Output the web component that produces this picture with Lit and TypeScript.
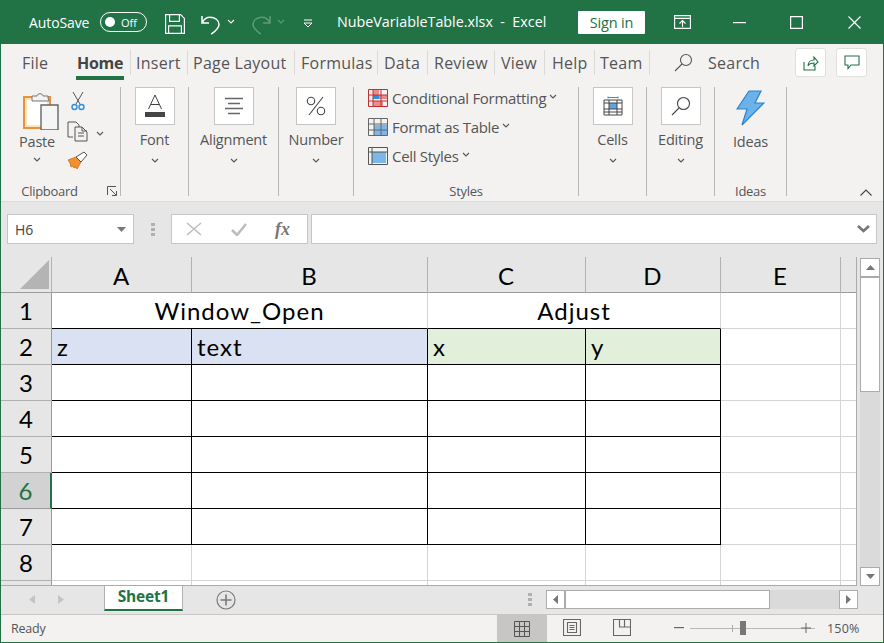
import { LitElement, html, css } from "lit";
import { customElement } from "lit/decorators.js";

const chev = (w = 8, c = "#555") => html`<svg class="chev" width="${w}" height="5" viewBox="0 0 8 5"><path d="M1 1l3 3 3-3" fill="none" stroke="${c}" stroke-width="1.1"/></svg>`;

const cols = [140, 236, 158, 135, 120, 17];
const rows = [1, 2, 3, 4, 5, 6, 7];

@customElement("app-root")
export class AppRoot extends LitElement {
  static styles = css`
    :host { display: block; width: 884px; height: 643px; overflow: hidden; font-family: "Open Sans", "Noto Sans", sans-serif; color: #444; }
    * { box-sizing: border-box; }
    svg { display: block; flex: none; }
    .win { width: 884px; height: 643px; display: flex; flex-direction: column; border: solid #217346; border-width: 0 1px 1px 1px; background: #e6e6e6; }
    .title { height: 44px; margin: 0 -1px; background: #217346; color: #fff; display: flex; align-items: center; font-size: 14px; flex: none; position: relative; }
    .autosave { margin-left: 29px; width: 66px; letter-spacing: -.1px; white-space: nowrap; }
    .toggle { margin-left: 5px; width: 47px; height: 20px; border: 1px solid #fff; border-radius: 10px; display: flex; align-items: center; padding-left: 4px; font-size: 11px; gap: 6px; }
    .knob { width: 10px; height: 10px; border-radius: 50%; background: #fff; }
    .fname { position: absolute; left: 337px; top: 13px; font-size: 14.3px; white-space: pre; line-height: 18px; }
    .signin { position: absolute; left: 578px; top: 11px; width: 67px; height: 23px; background: #fff; color: #217346; border-radius: 1px; font-size: 14.5px; display: flex; align-items: center; justify-content: center; letter-spacing: -.2px; }

    .tabs { height: 36px; background: #f3f2f1; font-size: 16px; position: relative; flex: none; letter-spacing: .25px; }
    .tab { position: absolute; top: 8px; line-height: 22px; color: #555; white-space: nowrap; }
    .tab.active { font-weight: 700; color: #444; letter-spacing: -.3px; }
    .underline { position: absolute; left: 75px; top: 32px; width: 48px; height: 4px; background: #217346; }
    .tsep { position: absolute; top: 6px; width: 1px; height: 25px; background: #dcdad8; }
    .roundbtn { position: absolute; top: 4px; width: 31px; height: 29px; background: #fff; border: 1px solid #e1dfdd; border-radius: 3px; display: flex; align-items: center; justify-content: center; }

    .ribbon { height: 122px; background: #f3f2f1; border-bottom: 1px solid #dadada; display: grid; grid-template-columns: 120px 68px 90px 75px 225px 68px 68px 72px 1fr; flex: none; padding-top: 7px; }
    .group { border-right: 1px solid #b8b8b8; height: 109px; position: relative; font-size: 14.5px; color: #555; letter-spacing: -.2px; }
    .group.last { border-right: 0; }
    .glabel { position: absolute; bottom: -3px; left: 0; right: 0; text-align: center; font-size: 13px; letter-spacing: -.3px; line-height: 16px; }
    .big { display: flex; flex-direction: column; align-items: center; }
    .tile { width: 40px; height: 38px; background: #fff; border: 1px solid #c8c6c4; display: flex; align-items: center; justify-content: center; }
    .big .t { margin-top: 6px; line-height: 18px; }
    .big .chev { margin-top: 9px; }
    .styleitem { position: absolute; left: 14px; display: flex; align-items: center; gap: 4px; height: 22px; white-space: nowrap; font-size: 15px; letter-spacing: -.3px; }
    .styleitem .chev { margin-left: -1px; margin-bottom: 3px; }
    .abs { position: absolute; }

    .fbar { height: 55px; display: flex; align-items: flex-start; padding-top: 12px; flex: none; }
    .box { height: 30px; background: #fff; border: 1px solid #c6c6c6; display: flex; align-items: center; }
    .name { width: 127px; margin-left: 6px; padding: 0 7px; font-size: 14px; justify-content: space-between; color: #444; }
    .dots { width: 5px; display: flex; flex-direction: column; gap: 2px; }
    .fbar .dots { margin: 9px 0 0 17px; }
    .dots i { width: 4px; height: 3px; background: #b0b0b0; }
    .fx { width: 137px; margin-left: 15px; padding-left: 14px; gap: 29px; }
    .fxt { font-family: "Liberation Serif", serif; font-style: italic; font-size: 18px; font-weight: 700; color: #777; margin-left: -1px; }
    .input { width: 566px; margin-left: 3px; justify-content: flex-end; padding-right: 6px; }

    .sheetwrap { height: 329px; display: flex; flex: none; }
    .sheet { display: grid; width: 857px; height: 329px; grid-template-columns: 51px 140px 236px 158px 135px 120px 17px; grid-template-rows: repeat(9, 36px) 4px; overflow: hidden; background: #fff; border-right: 1px solid #ababab; border-bottom: 1px solid #ababab; font-family: Lato, sans-serif; color: #000; font-size: 24px; letter-spacing: 1px; }
    .ch { background: #e6e6e6; border-right: 1px solid #b1b1b1; border-bottom: 1px solid #9b9b9b; display: flex; align-items: center; justify-content: center; padding-top: 1px; }
    .corner { position: relative; }
    .tri { position: absolute; right: 2px; bottom: 3px; width: 0; height: 0; border-left: 29px solid transparent; border-bottom: 29px solid #b4b4b4; }
    .rh { background: #e6e6e6; border-right: 1px solid #9b9b9b; border-bottom: 1px solid #b1b1b1; display: flex; align-items: center; justify-content: center; letter-spacing: 0; }
    .rh.sel { background: #d2d2d2; color: #217346; border-right: 2px solid #217346; border-bottom-color: #9b9b9b; }
    .c { border-right: 1px solid #d4d4d4; border-bottom: 1px solid #d4d4d4; display: flex; align-items: flex-end; padding: 0 0 3px 5px; min-width: 0; }
    .b { border-right-color: #000; border-bottom-color: #000; }
    .bb { border-bottom-color: #000; }
    .merged { justify-content: center; padding: 0 0 1px; align-items: center; }
    .blue { background: #d9e1f2; }
    .green { background: #e2efda; }
    .open { border-bottom: 0; }

    .vs { width: 26px; padding: 1px 0 0 3px; display: flex; flex-direction: column; background: #e6e6e6; height: 329px; }
    .sb { background: #fff; border: 1px solid #ababab; display: flex; align-items: center; justify-content: center; flex: none; }
    .vtrack { height: 328px; background: #dadada; width: 20px; display: flex; flex-direction: column; }

    .tabbar { height: 29px; position: relative; flex: none; border-bottom: 1px solid #c6c6c6; background: #e6e6e6; }
    .sheettab { position: absolute; left: 103px; top: 0; width: 79px; height: 25px; background: #fff; border: solid #b1b1b1; border-width: 0 1px; border-bottom: 2px solid #217346; color: #217346; font-weight: 700; font-size: 15.5px; text-align: center; line-height: 21px; letter-spacing: -.2px; }
    .hs { position: absolute; left: 545px; top: 4px; width: 312px; height: 19px; background: #dadada; display: flex; }
    .status { flex: 1; background: #f3f2f1; position: relative; font-size: 12.5px; color: #555; }
    .ready { position: absolute; left: 10px; top: 5px; line-height: 18px; letter-spacing: -.2px; }
    .normal { position: absolute; left: 496px; top: 0; width: 50px; height: 27px; background: #c8c6c4; display: flex; align-items: center; justify-content: center; }
    .sv { position: absolute; top: 4px; }
    .pct { position: absolute; left: 826px; top: 5px; line-height: 18px; letter-spacing: .2px; }
  `;

  title_() {
    return html`<div class="title">
      <span class="autosave">AutoSave</span>
      <span class="toggle"><span class="knob"></span>Off</span>
      <span class="abs" style="left:165px;top:14px"><svg width="20" height="20" viewBox="0 0 20 20" fill="none" stroke="#fff" stroke-width="1.2"><path d="M.6.6h15l3.8 3.8v15H.6zM4.6.6v6.8h9.8V.6M3.6 19.4v-7.6h12.8v7.6"/></svg></span>
      <span class="abs" style="left:201px;top:14px"><svg width="20" height="21" viewBox="0 0 20 21" fill="none" stroke="#fff" stroke-width="1.5"><path d="M1 2v7h7M1.2 8.6C3 5 6 3.2 9 3.2c5 0 9 3 9 7.2 0 3.6-3 6.2-7.8 9.8"/></svg></span>
      <span class="abs" style="left:227px;top:19px">${chev(8, "#fff")}</span>
      <span class="abs" style="left:251px;top:14px"><svg width="20" height="21" viewBox="0 0 20 21" fill="none" stroke="#5d9a78" stroke-width="1.5"><path d="M19 2v7h-7M18.8 8.6C17 5 14 3.2 11 3.2c-5 0-9 3-9 7.2 0 3.6 3 6.2 7.8 9.8"/></svg></span>
      <span class="abs" style="left:277px;top:19px">${chev(8, "#5d9a78")}</span>
      <span class="abs" style="left:303px;top:19px"><svg width="10" height="9" viewBox="0 0 10 9" fill="none" stroke="#fff" stroke-width="1"><path d="M1 1h8M1 4l4 4 4-4z"/></svg></span>
      <span class="fname">NubeVariableTable.xlsx  -  Excel</span>
      <span class="signin">Sign in</span>
      <span class="abs" style="left:674px;top:15px"><svg width="17" height="14" viewBox="0 0 17 14" fill="none" stroke="#fff" stroke-width="1.1"><path d="M.6.6h15.8v12.8H.6zM.6 3.4h15.8M8.5 12V5.500M5.500 8.500l3-3 3 3"/></svg></span>
      <span class="abs" style="left:733px;top:22px"><svg width="13" height="2" viewBox="0 0 13 2"><path d="M0 0h13v1.200H0z" fill="#fff"/></svg></span>
      <span class="abs" style="left:790px;top:16px"><svg width="13" height="13" viewBox="0 0 13 13" fill="none" stroke="#fff" stroke-width="1.200"><path d="M.6.6h11.800v11.800H.6z"/></svg></span>
      <span class="abs" style="left:848px;top:16px"><svg width="13" height="13" viewBox="0 0 13 13" fill="none" stroke="#fff" stroke-width="1.200"><path d="M.5.5l12 12M12.500.5l-12 12"/></svg></span>
    </div>`;
  }

  tabs_() {
    const t: [string, number, boolean?][] = [["File", 21], ["Home", 76, true], ["Insert", 135], ["Page Layout", 192], ["Formulas", 300], ["Data", 383], ["Review", 433], ["View", 500], ["Help", 551], ["Team", 599]];
    return html`<div class="tabs">
      ${t.map(([s, x, a]) => html`<span class="tab ${a ? "active" : ""}" style="left:${x}px">${s}</span>`)}
      <span class="underline"></span>
      ${[129, 186, 293, 376, 426, 493, 543, 593, 648].map((x) => html`<span class="tsep" style="left:${x}px"></span>`)}
      <span class="abs" style="left:673px;top:9px"><svg width="19" height="19" viewBox="0 0 19 19" fill="none" stroke="#555" stroke-width="1.100"><circle cx="12" cy="7" r="5.500"/><path d="M8 11l-7 7"/></svg></span>
      <span class="tab" style="left:707px">Search</span>
      <span class="roundbtn" style="left:794px"><svg width="16" height="16" viewBox="0 0 16 16" fill="none" stroke="#217346" stroke-width="1.100"><path d="M1 7v8h11v-4M5 11c0-4 3-6 6-6V2l4 5-4 4V8c-3 0-5 1-6 3z"/></svg></span>
      <span class="roundbtn" style="left:835px"><svg width="16" height="15" viewBox="0 0 16 15" fill="none" stroke="#217346" stroke-width="1.100"><path d="M1 1h14v9H7l-3 3.500V10H1z"/></svg></span>
    </div>`;
  }

  big(label: string, icon: unknown) {
    return html`<div class="group big"><span class="tile">${icon}</span><span class="t">${label}</span>${chev()}</div>`;
  }

  ribbon_() {
    const font = html`<svg width="20" height="24" viewBox="0 0 20 24"><path d="M3.500 15L10 1l6.500 14M5.800 10.500h8.400" fill="none" stroke="#444" stroke-width="1"/><path d="M0 18h20v5H0z" fill="#444"/></svg>`;
    const align = html`<svg width="18" height="18" viewBox="0 0 18 18"><path d="M0 1.500h18M3 6.500h12M0 11.500h18M3 16.500h12" stroke="#666" stroke-width="1.300"/></svg>`;
    const pct = html`<svg width="20" height="20" viewBox="0 0 20 20" fill="none" stroke="#444" stroke-width="1.100"><circle cx="5" cy="5" r="3.700"/><circle cx="15" cy="15" r="3.700"/><path d="M17 1L3 19"/></svg>`;
    const cells = html`<svg width="20" height="20" viewBox="0 0 20 20" fill="none"><path d="M6 7h8v6H6z" fill="#5ea5e0"/><path d="M1 4h18v15H1zM1 7h18M1 13h18M1 16h18M6 4v15M14 4v15" stroke="#444" stroke-width="1"/><path d="M5 1.500h10M5 .5v2M15 .5v2" stroke="#2f8fdc" stroke-width="1"/></svg>`;
    const mag = html`<svg width="20" height="20" viewBox="0 0 20 20" fill="none" stroke="#444" stroke-width="1.100"><circle cx="12.500" cy="7.500" r="6"/><path d="M8 12l-7 7"/></svg>`;
    const brush = html`<path d="M18 3L8 14l-3 3 3 0 2-2z" fill="#fff" stroke="#444" stroke-width="1"/>`;
    return html`<div class="ribbon">
      <div class="group">
        <span class="abs" style="left:22px;top:5px"><svg width="36" height="38" viewBox="0 0 36 38"><path d="M1 5h26v31H1z" fill="#fde5b5" stroke="#e8923c" stroke-width="2"/><path d="M4 8h20v25H4z" fill="#fff"/><path d="M9 6V4h5c0-3 6-3 6 0h5v2l1 3H9z" fill="#f3f2f1" stroke="#777" stroke-width="1"/><path d="M18 13h17v25H18z" fill="#f5f5f5" stroke="#666" stroke-width="1.400"/></svg></span>
        <span class="abs" style="left:18px;top:46px;line-height:18px">Paste</span>
        <span class="abs" style="left:32px;top:70px">${chev()}</span>
        <span class="abs" style="left:69px;top:4px"><svg width="16" height="20" viewBox="0 0 16 20" fill="none"><path d="M3 1l7 12M13 1L6 13" stroke="#555" stroke-width="1"/><circle cx="4.500" cy="16" r="2.500" stroke="#2f8fdc" stroke-width="1.400"/><circle cx="11.500" cy="16" r="2.500" stroke="#2f8fdc" stroke-width="1.400"/></svg></span>
        <span class="abs" style="left:66px;top:34px"><svg width="21" height="21" viewBox="0 0 21 21" fill="none" stroke="#555" stroke-width="1"><path d="M6 16H1V1h8l3 3v2M8 6h7l5 5v9H8zM11 12h6M11 15h6M15 6v4h5"/></svg></span>
        <span class="abs" style="left:95px;top:44px">${chev()}</span>
        <span class="abs" style="left:66px;top:64px"><svg width="21" height="19" viewBox="0 0 21 19"><path d="M1 9l8-3 5 5-4 7-1-2-2 1-1-2-2 1-1-4z" fill="#f09030" stroke="#d06a10" stroke-width=".8"/><path d="M9 6l2 2 1 1 2 2 6-7-3-3z" fill="#fff" stroke="#555" stroke-width="1"/></svg></span>
        <span class="glabel" style="right:22px">Clipboard</span>
        <span class="abs" style="right:3px;bottom:0"><svg width="10" height="10" viewBox="0 0 10 10" fill="none" stroke="#555" stroke-width="1"><path d="M.5 9V.5H9M3 3l6 6M9.500 5v4.500H5"/></svg></span>
      </div>
      ${this.big("Font", font)}
      ${this.big("Alignment", align)}
      ${this.big("Number", pct)}
      <div class="group">
        <div class="styleitem" style="top:0">
          <svg width="20" height="18" viewBox="0 0 20 18" fill="none"><path d="M5 1h6v5h8v4H5z" fill="#ef8a8a"/><path d="M5 12h10v5H5z" fill="#ef8a8a"/><path d="M5 6h6v4H5z" fill="#2f8fdc"/><path d="M.5.500h19v17H.500zM5 1v17M13 1v17M1 6h18M1 12h18" stroke="#c03030" stroke-width="1"/></svg>
          <span>Conditional Formatting</span>${chev()}
        </div>
        <div class="styleitem" style="top:29px">
          <svg width="20" height="18" viewBox="0 0 20 18" fill="none"><path d="M6 7h13v10H6z" fill="#7cb7e8"/><path d="M.5.500h19v17H.500zM1 6h18M1 12h18M6 1v17M13 1v17" stroke="#666" stroke-width="1"/>${brush}</svg>
          <span>Format as Table</span>${chev()}
        </div>
        <div class="styleitem" style="top:58px">
          <svg width="20" height="18" viewBox="0 0 20 18" fill="none"><path d="M4 5h14v11H4z" fill="#7cb7e8"/><path d="M.5.500h19v17H.500zM1 5h18M4 1v17" stroke="#555" stroke-width="1"/>${brush}</svg>
          <span>Cell Styles</span>${chev()}
        </div>
        <span class="glabel">Styles</span>
      </div>
      ${this.big("Cells", cells)}
      ${this.big("Editing", mag)}
      <div class="group big">
        <span class="abs" style="left:21px;top:3px"><svg width="29" height="36" viewBox="0 0 29 36"><path d="M13 1h12l-6 12h9L6 35l5-16H1z" fill="#6cb2ea" stroke="#2a84cc" stroke-width="1.200"/></svg></span>
        <span class="abs" style="left:0;right:0;top:46px;text-align:center;line-height:18px">Ideas</span>
        <span class="glabel">Ideas</span>
      </div>
      <div class="group last">
        <span class="abs" style="right:11px;bottom:0"><svg width="12" height="7" viewBox="0 0 12 7" fill="none" stroke="#444" stroke-width="1.100"><path d="M.5 6.500L6 1l5.500 5.500"/></svg></span>
      </div>
    </div>`;
  }

  fbar_() {
    return html`<div class="fbar">
      <div class="box name"><span>H6</span><svg width="9" height="5" viewBox="0 0 9 5"><path d="M0 0h9L4.500 5z" fill="#777"/></svg></div>
      <div class="dots"><i></i><i></i><i></i></div>
      <div class="box fx">
        <svg width="16" height="14" viewBox="0 0 16 14" fill="none" stroke="#bdbdbd" stroke-width="1.600"><path d="M1 1l14 12M15 1L1 13"/></svg>
        <svg width="16" height="13" viewBox="0 0 16 13" fill="none" stroke="#bdbdbd" stroke-width="2.600"><path d="M1 7l5 5 9-11"/></svg>
        <span class="fxt">fx</span>
      </div>
      <div class="box input"><svg width="13" height="8" viewBox="0 0 13 8" fill="none" stroke="#777" stroke-width="2.600"><path d="M1 1l5.500 5L12 1"/></svg></div>
    </div>`;
  }

  sheet_() {
    const heads = ["A", "B", "C", "D", "E", ""];
    return html`<div class="sheetwrap">
      <div class="sheet">
        <div class="ch corner"><span class="tri"></span></div>
        ${heads.map((h) => html`<div class="ch">${h}</div>`)}
        <div class="rh">1</div>
        <div class="c merged bb" style="grid-column:span 2">Window_Open</div>
        <div class="c merged bb" style="grid-column:span 2">Adjust</div>
        <div class="c"></div><div class="c"></div>
        <div class="rh">2</div>
        <div class="c b blue">z</div><div class="c b blue">text</div><div class="c b green">x</div><div class="c b green">y</div><div class="c"></div><div class="c"></div>
        ${rows.slice(2).map((r) => html`<div class="rh ${r === 6 ? "sel" : ""}">${r}</div>
          ${cols.slice(0, 4).map(() => html`<div class="c b"></div>`)}<div class="c"></div><div class="c"></div>`)}
        <div class="rh">8</div>
        ${cols.map(() => html`<div class="c"></div>`)}
        <div class="rh open"></div>
        ${cols.map(() => html`<div class="c open"></div>`)}
      </div>
      <div class="vs">
        <div class="vtrack">
          <div class="sb" style="width:20px;height:19px"><svg width="9" height="5" viewBox="0 0 9 5"><path d="M4.500 0L9 5H0z" fill="#777"/></svg></div>
          <div class="sb" style="width:20px;height:115px"></div>
          <div style="flex:1"></div>
          <div class="sb" style="width:20px;height:19px"><svg width="9" height="5" viewBox="0 0 9 5"><path d="M0 0h9L4.500 5z" fill="#777"/></svg></div>
        </div>
      </div>
    </div>`;
  }

  bottom_() {
    return html`<div class="tabbar">
      <span class="abs" style="left:28px;top:9px"><svg width="6" height="9" viewBox="0 0 6 9"><path d="M6 0v9L0 4.500z" fill="#c4c4c4"/></svg></span>
      <span class="abs" style="left:57px;top:9px"><svg width="6" height="9" viewBox="0 0 6 9"><path d="M0 0v9l6-4.500z" fill="#c4c4c4"/></svg></span>
      <div class="sheettab">Sheet1</div>
      <span class="abs" style="left:215px;top:4px"><svg width="20" height="20" viewBox="0 0 20 20" fill="none" stroke="#7a7a7a" stroke-width="1.200"><circle cx="10" cy="10" r="9"/><path d="M10 4.500v11M4.500 10h11" stroke-width="1.600"/></svg></span>
      <div class="dots abs" style="left:527px;top:7px"><i></i><i></i><i></i></div>
      <div class="hs">
        <div class="sb" style="width:19px;height:19px"><svg width="5" height="9" viewBox="0 0 5 9"><path d="M5 0v9L0 4.500z" fill="#777"/></svg></div>
        <div class="sb" style="width:205px;height:19px"></div>
        <div style="flex:1"></div>
        <div class="sb" style="width:19px;height:19px"><svg width="5" height="9" viewBox="0 0 5 9"><path d="M0 0v9l5-4.500z" fill="#777"/></svg></div>
      </div>
    </div>
    <div class="status">
      <span class="ready">Ready</span>
      <div class="normal"><svg width="16" height="16" viewBox="0 0 16 16" fill="none" stroke="#555" stroke-width="1"><path d="M.5.500h15v15H.500zM5.500 1v15M10.500 1v15M1 5.500h15M1 10.500h15"/></svg></div>
      <span class="sv" style="left:562px"><svg width="18" height="17" viewBox="0 0 18 17" fill="none" stroke="#666" stroke-width="1.100"><path d="M.5.500h17v16H.500zM4.500 3.500h9v10h-9zM6.500 6.500h5M6.500 8.500h5M6.500 10.500h5"/></svg></span>
      <span class="sv" style="left:612px"><svg width="18" height="17" viewBox="0 0 18 17" fill="none" stroke="#666" stroke-width="1.100"><path d="M.5.500h17v16H.500zM6.500 1v7h5V1M11.500 1v7h6"/></svg></span>
      <span class="sv" style="left:673px;top:12px"><svg width="10" height="2" viewBox="0 0 10 2"><path d="M0 0h10v1.200H0z" fill="#666"/></svg></span>
      <span class="sv" style="left:689px;top:13px"><svg width="126" height="2" viewBox="0 0 126 2"><path d="M0 .5h125" stroke="#b8b8b8"/></svg></span>
      <span class="sv" style="left:731px;top:10px"><svg width="2" height="7" viewBox="0 0 2 7"><path d="M.5 0v7" stroke="#aaa"/></svg></span>
      <span class="sv" style="left:739px;top:6px"><svg width="7" height="14" viewBox="0 0 7 14"><path d="M0 0h6v14H0z" fill="#777"/></svg></span>
      <span class="sv" style="left:800px;top:8px"><svg width="10" height="10" viewBox="0 0 10 10"><path d="M5 0v10M0 5h10" stroke="#666" stroke-width="1"/></svg></span>
      <span class="pct">150%</span>
    </div>`;
  }

  render() {
    return html`<div class="win">${this.title_()}${this.tabs_()}${this.ribbon_()}${this.fbar_()}${this.sheet_()}${this.bottom_()}</div>`;
  }
}
